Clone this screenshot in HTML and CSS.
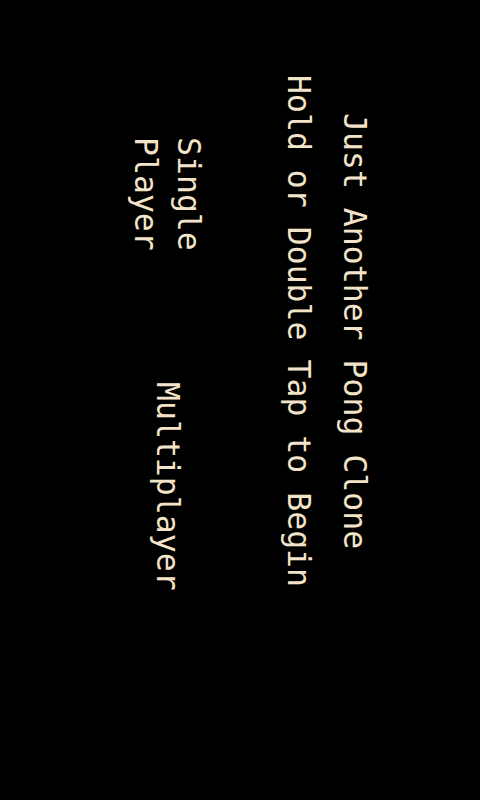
FILE: index.html
```html
<!DOCTYPE html>
<html>
<head>
<meta charset="utf-8">
<link rel="stylesheet" href="styles.css">
</head>
<body>
<div class="screen">
  <div class="title">
    <p class="line">Just Another Pong Clone</p>
    <p class="line">Hold or Double Tap to Begin</p>
  </div>
  <div class="modes">
    <p class="mode single">Single<br>Player</p>
    <p class="mode multi">Multiplayer</p>
  </div>
</div>
</body>
</html>
```
FILE: styles.css
```css
html, body {
  margin: 0;
  padding: 0;
  background: #000;
}
.screen {
  width: 480px;
  height: 800px;
  box-sizing: border-box;
  writing-mode: vertical-rl;
  padding-right: 97px;
  color: #f3e4c9;
  font-family: "DejaVu Sans Mono", "Liberation Mono", monospace;
  font-size: 31.5px;
  overflow: hidden;
}
.title {
  inline-size: 662px;
  text-align: center;
}
.line {
  margin: 0;
  line-height: 56px;
  white-space: nowrap;
}
.modes {
  display: flex;
  align-items: center;
  margin-right: 61px;
}
.mode {
  margin: 0;
  line-height: 43px;
  white-space: nowrap;
}
.single {
  margin-top: 137px;
}
.multi {
  margin-top: 131px;
}
```
